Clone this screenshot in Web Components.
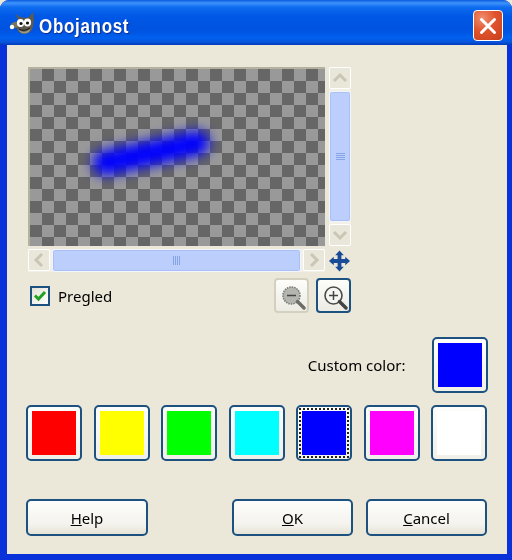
<!DOCTYPE html>
<html>
<head>
<meta charset="utf-8">
<title>Obojanost</title>
<style>
  html, body { margin: 0; padding: 0; background: #ece9d8; }
  body { width: 512px; height: 560px; overflow: hidden; font-family: "Noto Sans", sans-serif; }
  .row { display: flex; align-items: center; }
  .controls { justify-content: space-between; margin-top: 6px; height: 35px; width: 325px; }
  .custom { justify-content: flex-end; gap: 26px; margin-top: 24px; font-size: 15px; color: #000; }
  .swatches { justify-content: space-between; margin-top: 12px; }
  .actions { margin-top: 38px; gap: 13px; }
  .actions .help { width: 122px; margin-right: 71px; }
  .zoomers { display: flex; gap: 7px; }
</style>
</head>
<body>
<xp-dialog heading="Obojanost">
  <color-preview></color-preview>
  <div class="row controls">
    <xp-check checked>Pregled</xp-check>
    <div class="zoomers">
      <tool-button kind="out" disabled></tool-button>
      <tool-button kind="in"></tool-button>
    </div>
  </div>
  <div class="row custom">
    <span>Custom color:</span>
    <color-swatch color="#0000ff"></color-swatch>
  </div>
  <div class="row swatches">
    <color-swatch color="#ff0000"></color-swatch>
    <color-swatch color="#ffff00"></color-swatch>
    <color-swatch color="#00ff00"></color-swatch>
    <color-swatch color="#00ffff"></color-swatch>
    <color-swatch color="#0000ff" focused></color-swatch>
    <color-swatch color="#ff00ff"></color-swatch>
    <color-swatch color="#ffffff"></color-swatch>
  </div>
  <div class="row actions">
    <xp-button class="help"><u>H</u>elp</xp-button>
    <xp-button><u>O</u>K</xp-button>
    <xp-button><u>C</u>ancel</xp-button>
  </div>
</xp-dialog>

<script>
class XpDialog extends HTMLElement {
    constructor() {
        super();
        this.shadow = this.attachShadow({ mode: 'open' });
    }

    connectedCallback() {
        this.shadow.innerHTML = `
            <style>
                :host {
                    display: flex;
                    flex-direction: column;
                    width: 512px;
                    height: 560px;
                    box-sizing: border-box;
                    border-radius: 9px 9px 0 0;
                    background: #0831d9;
                    overflow: hidden;
                    filter: blur(0.35px);
                }
                .title {
                    height: 45px;
                    flex: none;
                    display: flex;
                    align-items: center;
                    box-sizing: border-box;
                    padding: 0 9px 0 9px;
                    background: linear-gradient(to bottom, #0a5be0 0, #3f93fb 3px, #0f6df0 7px, #0058e6 16px, #0053e0 30px, #0060f0 38px, #0a55dc 42px, #0039b8 45px);
                }
                .logo { width: 28px; height: 24px; flex: none; margin-right: 2px; margin-top: 2px; }
                .text {
                    flex: 1;
                    color: #fff;
                    font: bold 20px "Liberation Sans", sans-serif;
                    letter-spacing: 0.8px;
                    text-shadow: 1px 1px 1px #0f2d8a;
                    transform: scaleX(0.85);
                    transform-origin: left center;
                    margin-top: 7px;
                }
                .close {
                    flex: none;
                    width: 30px;
                    height: 31px;
                    box-sizing: border-box;
                    border: 1px solid #fff;
                    border-radius: 4px;
                    background: radial-gradient(circle at 30% 25%, #ef8f70 0, #e0532c 45%, #c7401c 100%);
                    margin-top: 6px;
                    display: flex;
                    align-items: center;
                    justify-content: center;
                }
                .body {
                    flex: 1;
                    margin: 0 5.5px 6px 7px;
                    padding: 22px 19px 0 19px;
                    background: #ebe8d9;
                    box-sizing: border-box;
                }
            </style>
            <div class="title">
                <svg class="logo" viewBox="0 0 28 24">
                    <path d="M9 7 L6 2 L11 5 L17 6 L20 5 L24 0 L25 7 L24 15 Q22 22 15 22 Q8 21 7 14 Z" fill="#5d5a4e"/>
                    <path d="M2 12 Q5 9 9 10 L9 15 Q5 17 2 15 Z" fill="#76735f"/>
                    <path d="M9 17 Q15 23 22 16 L20 20 Q15 23 11 20 Z" fill="#9c9985"/>
                    <circle cx="3" cy="15" r="2.2" fill="#fff"/>
                    <ellipse cx="11.5" cy="11" rx="3.6" ry="4" fill="#fff"/>
                    <ellipse cx="18.5" cy="10.5" rx="3.6" ry="4" fill="#fff"/>
                    <circle cx="12" cy="11.5" r="1.6" fill="#111"/>
                    <circle cx="18.5" cy="11" r="1.6" fill="#111"/>
                    <path d="M10 17 Q15 20 21 16" stroke="#23221e" stroke-width="1.2" fill="none"/>
                </svg>
                <span class="text">${this.getAttribute('heading')}</span>
                <div class="close">
                    <svg width="20" height="20" viewBox="0 0 20 20">
                        <path d="M3.5 3.5 L16.5 16.5 M16.5 3.5 L3.5 16.5" stroke="#fff" stroke-width="3" stroke-linecap="round"/>
                    </svg>
                </div>
            </div>
            <div class="body"><slot></slot></div>
        `;
    }
}

class ColorPreview extends HTMLElement {
    constructor() {
        super();
        this.shadow = this.attachShadow({ mode: 'open' });
    }

    connectedCallback() {
        this.shadow.innerHTML = `
            <style>
                :host {
                    display: grid;
                    grid-template-columns: 297px 22px 4px;
                    grid-template-rows: 179px 23px;
                    column-gap: 4px;
                    row-gap: 3px;
                    margin-left: 2px;
                    width: 323px;
                    height: 205px;
                }
                .canvas {
                    box-sizing: border-box;
                    border: 2px solid #b4b19f;
                    border-right-width: 0;
                    border-bottom-width: 0;
                    background: repeating-conic-gradient(#666 0 25%, #999 0 50%) 0 0 / 24px 24px;
                    background-origin: padding-box;
                    overflow: hidden;
                }
                svg { display: block; }
                .move { display: flex; align-items: center; justify-content: center; margin-left: -1px; }
                .h { grid-column: 1; grid-row: 2; }
                .v { grid-column: 2; grid-row: 1; }
                .move { grid-column: 2; grid-row: 2; }
            </style>
            <div class="canvas">
                <svg width="295" height="177" viewBox="0 0 295 177">
                    <defs><filter id="soft" filterUnits="userSpaceOnUse" x="0" y="0" width="295" height="177">
                        <feGaussianBlur stdDeviation="6.5"/>
                    </filter></defs>
                    <path d="M75 94 L167 74" stroke="#0000ff" stroke-width="25" stroke-linecap="round" fill="none" filter="url(#soft)"/>
                </svg>
            </div>
            <xp-scrollbar class="v" orient="v"></xp-scrollbar>
            <xp-scrollbar class="h" orient="h"></xp-scrollbar>
            <div class="move">
                <svg width="24" height="24" viewBox="0 0 24 24" fill="#1a4b96">
                    <path d="M12 1 L16.5 6 H14 V10 H18 V7.5 L23 12 L18 16.5 V14 H14 V18 H16.5 L12 23 L7.5 18 H10 V14 H6 V16.5 L1 12 L6 7.5 V10 H10 V6 H7.5 Z"/>
                </svg>
            </div>
        `;
    }
}

class XpScrollbar extends HTMLElement {
    constructor() {
        super();
        this.shadow = this.attachShadow({ mode: 'open' });
    }

    connectedCallback() {
        const vertical = this.getAttribute('orient') === 'v';
        const arrows = vertical
            ? ['M4 13 L10 7 L16 13', 'M4 7 L10 13 L16 7']
            : ['M13 4 L7 10 L13 16', 'M7 4 L13 10 L7 16'];
        const arrow = (d) => `
            <div class="arrow">
                <svg width="20" height="20" viewBox="0 0 20 20">
                    <path d="${d}" stroke="#c9c6b6" stroke-width="3" fill="none"/>
                </svg>
            </div>`;
        const grip = vertical
            ? '<path d="M0 1H9M0 3H9M0 5H9M0 7H9" stroke="#86a3e6"/>'
            : '<path d="M1 0V9M3 0V9M5 0V9M7 0V9" stroke="#86a3e6"/>';
        this.shadow.innerHTML = `
            <style>
                :host {
                    display: flex;
                    flex-direction: ${vertical ? 'column' : 'row'};
                    gap: 2px;
                    background: #f3f1e7;
                }
                .arrow {
                    flex: none;
                    width: 22px;
                    height: 22px;
                    box-sizing: border-box;
                    background: #e9e7da;
                    border: 1px solid #fff;
                    border-radius: 2px;
                    display: flex;
                    align-items: center;
                    justify-content: center;
                }
                .thumb {
                    flex: 1;
                    box-sizing: border-box;
                    border: 1px solid #f2f5ff;
                    border-radius: 3px;
                    background: #bccffc;
                    box-shadow: inset 0 0 0 1px #a9c0f5;
                    display: flex;
                    align-items: center;
                    justify-content: center;
                }
            </style>
            ${arrow(arrows[0])}
            <div class="thumb">
                <svg width="9" height="9" viewBox="0 0 9 9" shape-rendering="crispEdges">${grip}</svg>
            </div>
            ${arrow(arrows[1])}
        `;
    }
}

class XpCheck extends HTMLElement {
    constructor() {
        super();
        this.shadow = this.attachShadow({ mode: 'open' });
    }

    connectedCallback() {
        this.shadow.innerHTML = `
            <style>
                :host {
                    display: inline-flex;
                    align-items: center;
                    gap: 8px;
                    margin-left: 4px;
                    font: 15px "Noto Sans", sans-serif;
                    color: #000;
                }
                .box {
                    width: 20px;
                    height: 20px;
                    box-sizing: border-box;
                    border: 2px solid #1c5180;
                    background: linear-gradient(135deg, #e4e2d6, #fff);
                    display: flex;
                    align-items: center;
                    justify-content: center;
                }
            </style>
            <div class="box">
                <svg width="14" height="14" viewBox="0 0 14 14">
                    <path d="M2 6.5 L5.5 10 L12 3" stroke="#21a121" stroke-width="3" fill="none"/>
                </svg>
            </div>
            <slot></slot>
        `;
    }
}

class ToolButton extends HTMLElement {
    constructor() {
        super();
        this.shadow = this.attachShadow({ mode: 'open' });
    }

    connectedCallback() {
        const zoomIn = this.getAttribute('kind') === 'in';
        const disabled = this.hasAttribute('disabled');
        const sign = zoomIn ? 'M9 13.5H18M13.5 9V18' : 'M9 13.5H18';
        this.shadow.innerHTML = `
            <style>
                :host {
                    display: flex;
                    align-items: center;
                    justify-content: center;
                    width: 35px;
                    height: 35px;
                    box-sizing: border-box;
                    border: 2px solid ${disabled ? '#d3d0bf' : '#1c5180'};
                    border-radius: 4px;
                    background: linear-gradient(to bottom, #fdfdfa, #ecebe4);
                }
            </style>
            <svg width="28" height="28" viewBox="0 0 28 28">
                <circle cx="13.5" cy="13.5" r="8.5" fill="${disabled ? '#b5b5b0' : '#f6f6f2'}" stroke="${disabled ? '#777' : '#4b4b4b'}" stroke-width="1.6" ${disabled ? 'stroke-dasharray="1.5 1"' : ''}/>
                <path d="${sign}" stroke="#444" stroke-width="1.5"/>
                <path d="M19.5 19.5 L26 26" stroke="${disabled ? '#6d6d68' : '#444'}" stroke-width="3.4" stroke-linecap="round"/>
            </svg>
        `;
    }
}

class ColorSwatch extends HTMLElement {
    constructor() {
        super();
        this.shadow = this.attachShadow({ mode: 'open' });
    }

    connectedCallback() {
        const color = this.getAttribute('color');
        const focused = this.hasAttribute('focused');
        this.shadow.innerHTML = `
            <style>
                :host {
                    display: block;
                    flex: none;
                    width: 56px;
                    height: 56px;
                    box-sizing: border-box;
                    border: 2px solid #1c5180;
                    border-radius: 5px;
                    background: linear-gradient(to bottom, #fdfdfb, #f0efe8);
                    padding: 1px;
                }
                .focus {
                    box-sizing: border-box;
                    width: 100%;
                    height: 100%;
                    border: 2px ${focused ? 'dotted #222' : 'solid transparent'};
                    padding: 1px;
                }
                .fill { width: 100%; height: 100%; background: ${color}; }
            </style>
            <div class="focus"><div class="fill"></div></div>
        `;
    }
}

class XpButton extends HTMLElement {
    constructor() {
        super();
        this.shadow = this.attachShadow({ mode: 'open' });
    }

    connectedCallback() {
        this.shadow.innerHTML = `
            <style>
                :host {
                    display: flex;
                    align-items: center;
                    justify-content: center;
                    flex: none;
                    width: 121px;
                    height: 37px;
                    box-sizing: border-box;
                    border: 2px solid #1c5180;
                    border-radius: 5px;
                    background: linear-gradient(to bottom, #fdfdfb 0, #f4f3ee 70%, #e6e3d6 100%);
                    font: 15px "Noto Sans", sans-serif;
                    color: #000;
                }
            </style>
            <slot></slot>
        `;
    }
}

customElements.define('xp-dialog', XpDialog);
customElements.define('color-preview', ColorPreview);
customElements.define('xp-scrollbar', XpScrollbar);
customElements.define('xp-check', XpCheck);
customElements.define('tool-button', ToolButton);
customElements.define('color-swatch', ColorSwatch);
customElements.define('xp-button', XpButton);
</script>
</body>
</html>
